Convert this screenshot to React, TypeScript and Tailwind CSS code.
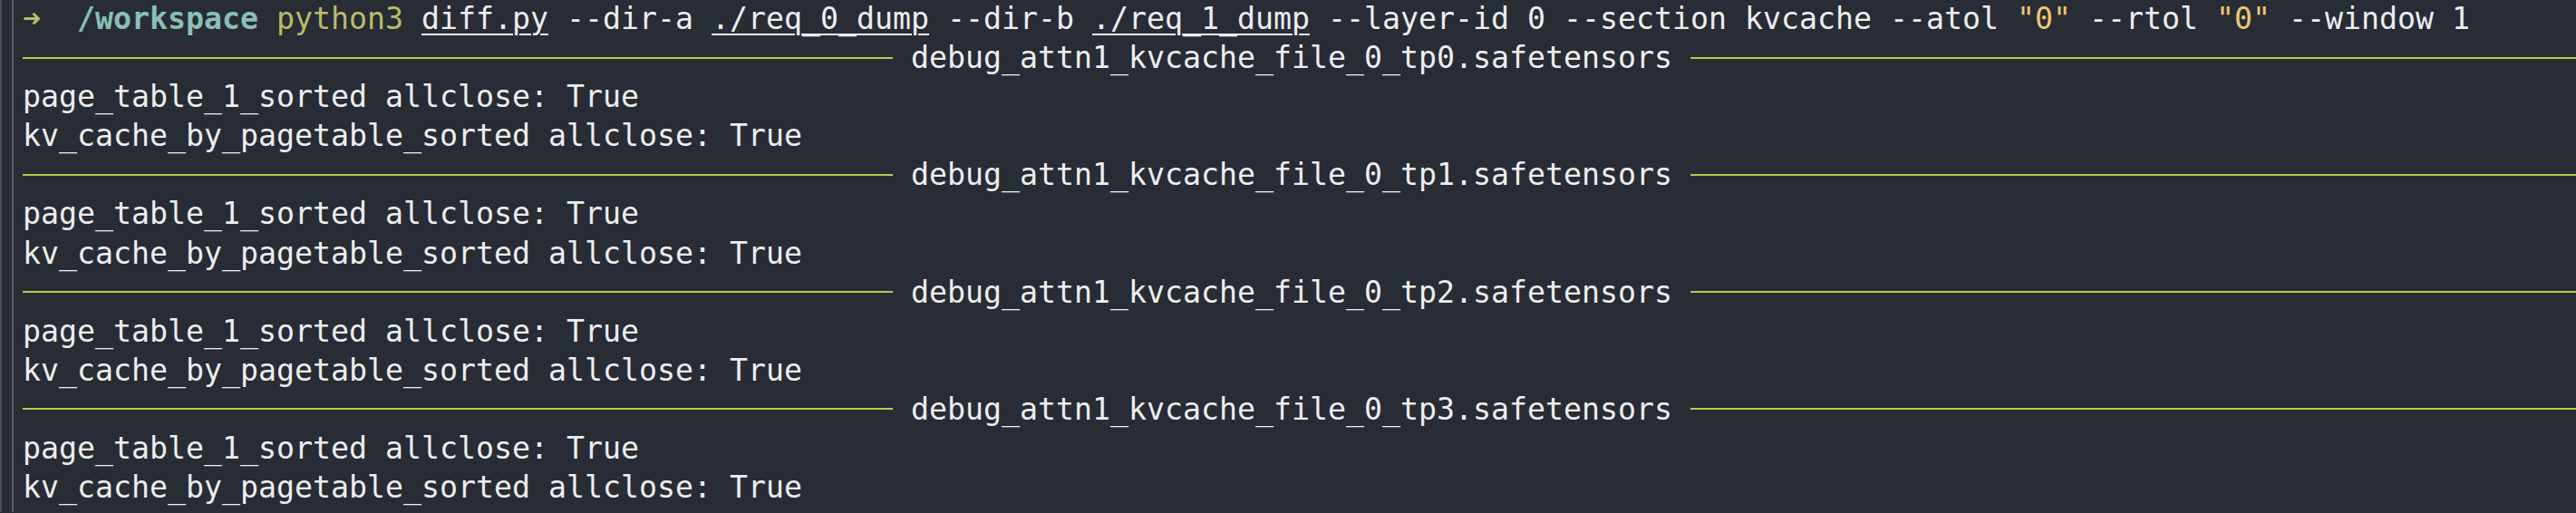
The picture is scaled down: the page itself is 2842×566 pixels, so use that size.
const RULE = "bg-[#b9ca4a]";

const sections = ["tp0", "tp1", "tp2", "tp3"];

function Rule({ title }: { title: string }) {
  return (
    <div className="flex items-center h-[43.1px]">
      <div className={`w-[960px] h-[2px] ${RULE}`} />
      <span className="mx-[20px] text-[#eceef0]">{title}</span>
      <div className={`flex-1 h-[2px] ${RULE}`} />
    </div>
  );
}

function Line({ children }: { children: React.ReactNode }) {
  return <div className="h-[43.1px] whitespace-pre text-[#eceef0]">{children}</div>;
}

export default function App() {
  return (
    <div className="h-[566px] w-full overflow-hidden bg-[#282c34] font-['DejaVu_Sans_Mono',monospace] text-[33.22px] leading-[43.1px]">
      <div className="h-full border-l-2 border-[#4a4e56] pl-[11px]">
        <div className="h-full border-l-2 border-[#5b5f67] pl-[10px]">
          <div className="-mt-[1px] flex flex-col">
            <Line>
              <span className="font-bold text-[#b5bd68]">➜</span>
              {"  "}
              <span className="font-bold text-[#8abeb7]">/workspace</span>{" "}
              <span className="text-[#b9bb6a]">python3</span>{" "}
              <span className="underline decoration-2 underline-offset-[5px]">diff.py</span>
              {" --dir-a "}
              <span className="underline decoration-2 underline-offset-[5px]">./req_0_dump</span>
              {" --dir-b "}
              <span className="underline decoration-2 underline-offset-[5px]">./req_1_dump</span>
              {" --layer-id 0 --section kvcache --atol "}
              <span className="text-[#f0c674]">"0"</span>
              {" --rtol "}
              <span className="text-[#f0c674]">"0"</span>
              {" --window 1"}
            </Line>
            {sections.map((tp) => (
              <div key={tp} className="flex flex-col">
                <Rule title={`debug_attn1_kvcache_file_0_${tp}.safetensors`} />
                <Line>page_table_1_sorted allclose: True</Line>
                <Line>kv_cache_by_pagetable_sorted allclose: True</Line>
              </div>
            ))}
          </div>
        </div>
      </div>
    </div>
  );
}
